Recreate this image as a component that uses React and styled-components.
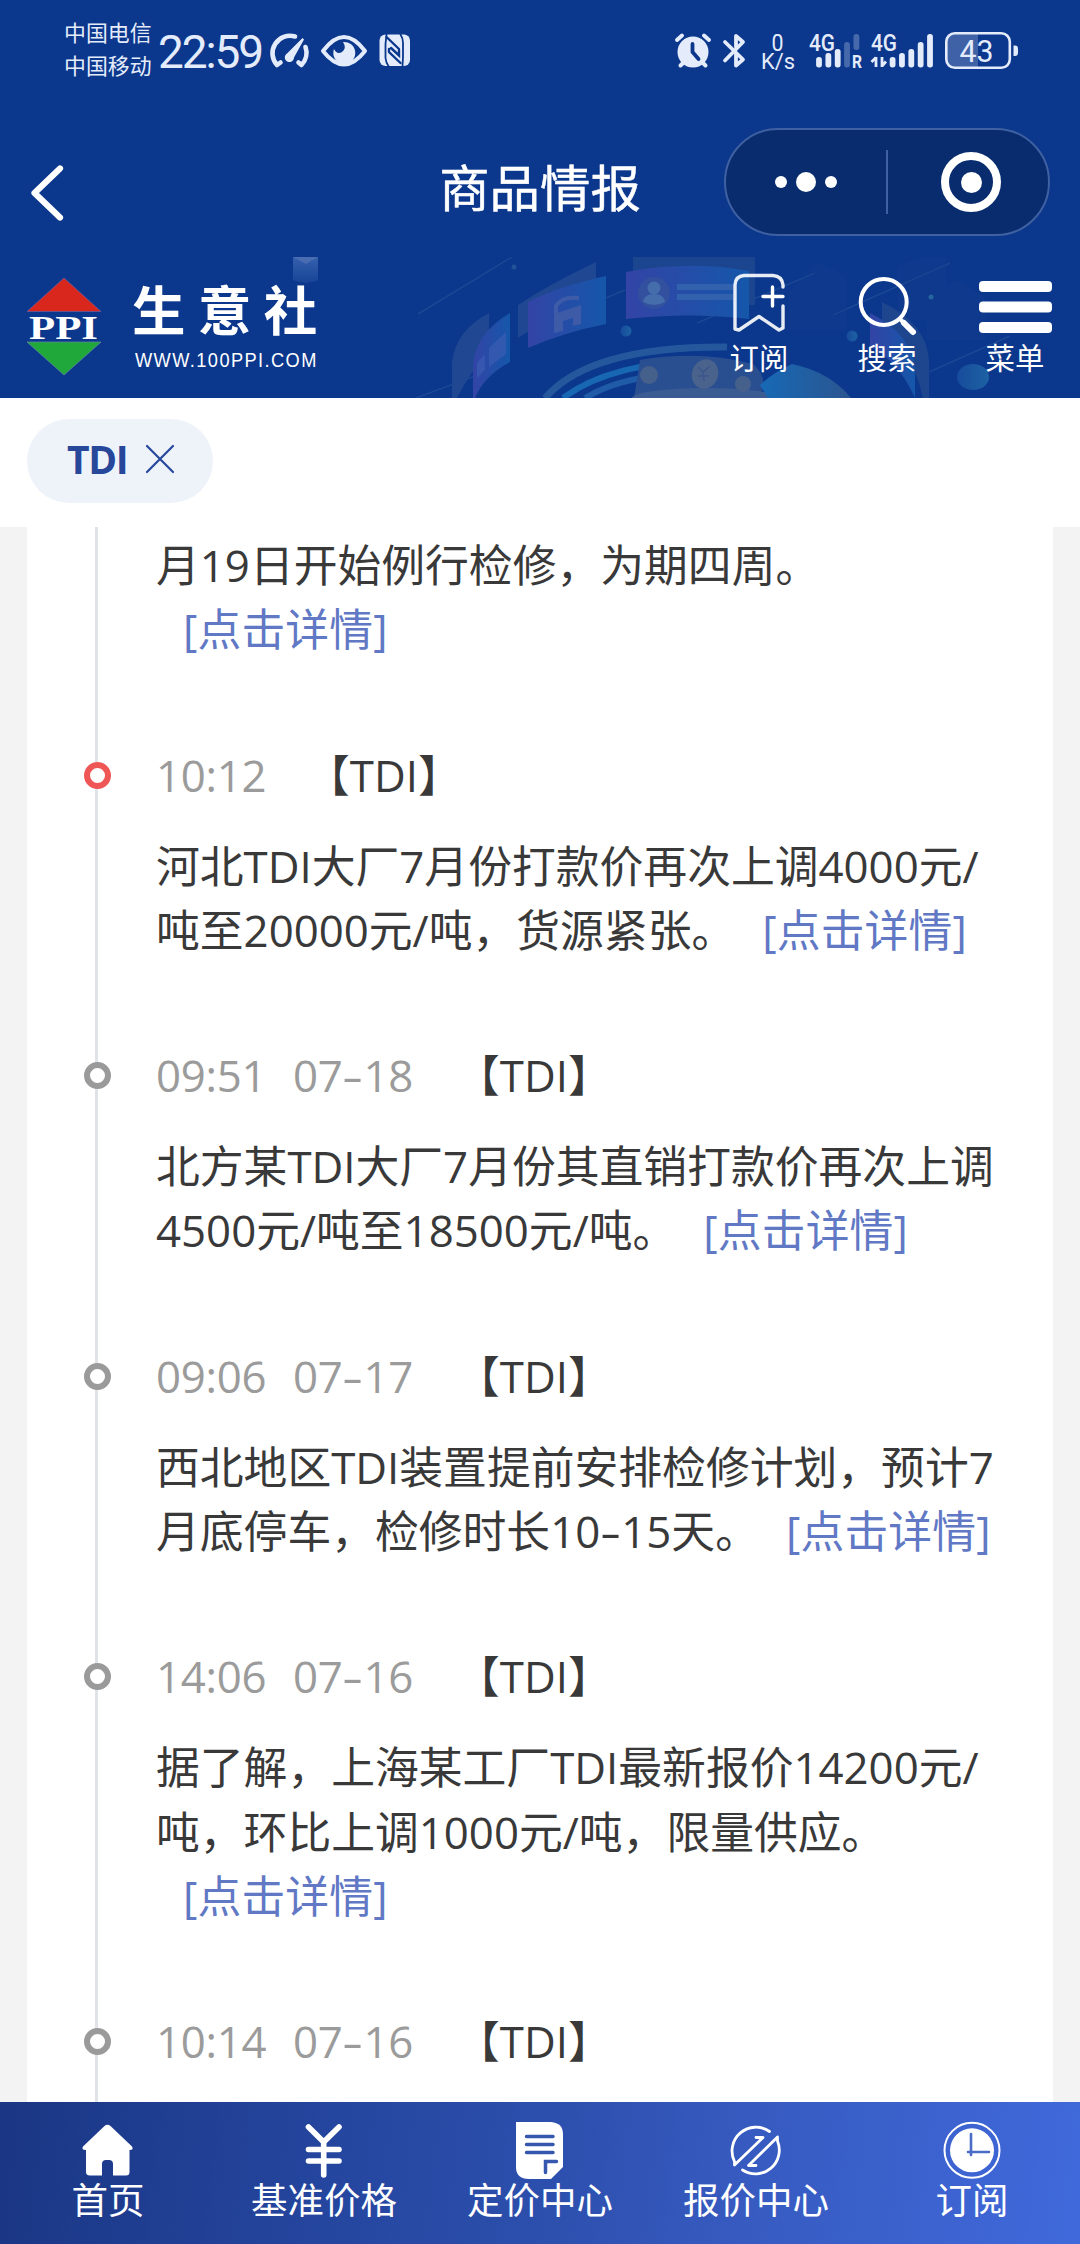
import React from "react";
import styled, { createGlobalStyle } from "styled-components";

const Global = createGlobalStyle`
  * { box-sizing: border-box; }
  body { margin: 0; background: #fff; }
`;

const ICE = "#e4ecfb";
const NAVY = "#0b378c";

const Page = styled.div`
  width: 1080px;
  height: 2244px;
  display: flex;
  flex-direction: column;
  overflow: hidden;
  background: #f3f3f3;
  font-family: "Open Sans", "Noto Sans CJK SC", sans-serif;
`;

const Top = styled.header`
  flex: none;
  background: ${NAVY};
  color: #fff;
`;

const StatusBar = styled.div`
  height: 104px;
  padding: 0 62px 0 64px;
  display: flex;
  justify-content: space-between;
  align-items: flex-start;
  color: ${ICE};
`;

const StatusSide = styled.div`
  display: flex;
  align-items: flex-start;
`;

const StatusIcons = styled.svg`
  flex: none;
  margin-top: ${(p) => p.$top}px;
`;

const Carriers = styled.div`
  padding-top: 15px;
  width: 94px;
  font: 400 21.9px/33px "Noto Sans CJK SC", sans-serif;
  white-space: nowrap;
`;

const Clock = styled.div`
  width: 111px;
  padding-top: 23px;
  font: 400 46px/58px Roboto, sans-serif;
  letter-spacing: -2.1px;
  white-space: nowrap;
`;

const NavBar = styled.div`
  height: 153px;
  display: grid;
  grid-template-columns: 356px 368px 326px;
  align-items: start;
`;

const Back = styled.button`
  margin: 57px 0 0 28px;
  padding: 0;
  border: 0;
  background: none;
  width: 40px;
  height: 62px;
`;

const Title = styled.h1`
  margin: 46px 0 0;
  text-align: center;
  font: 400 50.4px/72px "Noto Sans CJK SC", sans-serif;
  -webkit-text-stroke: 0.5px #fff;
`;

const Capsule = styled.div`
  margin-top: 24px;
  width: 326px;
  height: 108px;
  border: 2px solid #3f60a1;
  border-radius: 54px;
  background: #082c6e;
  display: grid;
  grid-template-columns: 160px 2px 160px;
  align-items: center;
`;

const Half = styled.div`
  display: flex;
  align-items: center;
  justify-content: center;
  gap: 9px;
  padding-left: ${(p) => p.$shift || 0}px;
`;

const Divider = styled.div`
  height: 64px;
  background: #3f60a1;
`;

const Dot = styled.span`
  width: ${(p) => p.$size}px;
  height: ${(p) => p.$size}px;
  border-radius: 50%;
  background: #fff;
`;

const Target = styled.span`
  width: 60px;
  height: 60px;
  border: 8.5px solid #fff;
  border-radius: 50%;
  display: flex;
  align-items: center;
  justify-content: center;
`;

const Hero = styled.div`
  position: relative;
  height: 141px;
  display: flex;
  justify-content: space-between;
  padding: 0 1px 0 26px;
  overflow: hidden;
`;

const HeroArt = styled.svg`
  position: absolute;
  left: 0;
  top: 0;
`;

const Brand = styled.div`
  position: relative;
  display: flex;
  padding-top: 20px;
`;

const BrandText = styled.div`
  margin: -1px 0 0 30px;
  display: flex;
  flex-direction: column;
`;

const BrandName = styled.div`
  font: 700 53.5px/64px "Noto Sans CJK SC", sans-serif;
  letter-spacing: 12.4px;
  white-space: nowrap;
`;

const BrandUrl = styled.div`
  margin: 6px 0 0 3px;
  font: 400 19.5px/28px "Liberation Sans", sans-serif;
  letter-spacing: 1.5px;
  white-space: nowrap;
  transform: scaleX(0.935);
  transform-origin: left;
`;

const Tools = styled.div`
  position: relative;
  display: flex;
  padding-top: 13px;
`;

const Tool = styled.div`
  width: 128px;
  display: flex;
  flex-direction: column;
  align-items: center;
  font: 400 29.4px/40px "Noto Sans CJK SC", sans-serif;
  svg { flex: none; margin-bottom: -2px; }
`;

const FilterBar = styled.div`
  flex: none;
  height: 129px;
  background: #fff;
  padding: 21px 27px 0;
`;

const Chip = styled.div`
  width: 186px;
  height: 84px;
  border-radius: 42px;
  background: #eef3fa;
  color: #27479b;
  display: flex;
  align-items: center;
  padding: 0 0 5px 40px;
  gap: 18px;
  font: 700 39px/78px "Open Sans", sans-serif;
  letter-spacing: -1.4px;
`;

const Feed = styled.main`
  flex: 1;
  min-height: 0;
  overflow: hidden;
  margin: 0 27px;
  padding-top: 6px;
  background: linear-gradient(#dfe2e7, #dfe2e7) 68px 0 / 3px 100% no-repeat #fff;
`;

const Item = styled.article`
  display: grid;
  grid-template-columns: 129px 1fr;
`;

const Marker = styled.span`
  margin: 19px 0 0 57px;
  width: 27px;
  height: 27px;
  border-radius: 50%;
  border: 6px solid ${(p) => (p.$active ? "#ef5656" : "#9a9a9a")};
  background: #fff;
`;

const Content = styled.div`
  padding-bottom: 81px;
  font-size: 43.8px;
  line-height: 64.3px;
  color: #393939;
  white-space: nowrap;
`;

const Head = styled.div`
  display: flex;
  height: 64px;
  margin-bottom: 27px;
  line-height: 64px;
`;

const Stamp = styled.span`
  width: ${(p) => p.$w}px;
  color: #9b9b9b;
  letter-spacing: -0.3px;
`;

const Hyphen = styled.span`
  display: inline-block;
  width: 21px;
  text-align: center;
  letter-spacing: 0;
  transform: scaleX(1.5);
`;

const Line = styled.div``;

const Link = styled.a`
  margin-left: 27px;
  color: #6178c5;
  letter-spacing: 0.15px;
`;

const TabBar = styled.nav`
  flex: none;
  height: 142px;
  display: grid;
  grid-template-columns: repeat(5, 1fr);
  background: linear-gradient(97deg, #1a3684 0%, #23439a 25%, #2c4fad 50%, #365abf 68%, #4069db 100%);
  color: #fff;
`;

const Tab = styled.div`
  display: flex;
  flex-direction: column;
  align-items: center;
  padding-top: 19px;
  font: 400 36.5px/50px "Noto Sans CJK SC", sans-serif;
  svg { flex: none; margin-bottom: -5px; }
`;

const LeftIcons = () => (
  <StatusIcons $top={30} width="142" height="40" viewBox="268 30 142 40" fill="none" stroke={ICE} strokeLinecap="round" strokeLinejoin="round">
    <path d="M279.500 62.500 L276 65 A17.500 17.500 0 0 1 294 36.500" strokeWidth="4.600" />
    <path d="M304.500 47 A17.500 17.500 0 0 1 300.500 65 L297.500 62.500" strokeWidth="4.600" />
    <path d="M301.500 38 L303 39.500 L293 57.500 A4.600 4.600 0 1 1 286 53.500 Z" fill={ICE} stroke="none" />
    <path d="M322 51 Q343 23 364 51 Q343 78 322 51Z" strokeWidth="4" />
    <path d="M342 42 A11 11 0 1 1 333 49 Q336 55 341 52 Q346 48 342 42Z" fill={ICE} stroke="none" />
    <rect x="378.500" y="34.500" width="30.500" height="31.500" rx="6" fill={ICE} stroke="none" />
    <path d="M385.500 34.500 L384.500 44 V58 Q385 63 387.500 66" stroke={NAVY} strokeWidth="1.800" />
    <path d="M399.500 34.500 Q402 38 402 43 V57 L401.500 66" stroke={NAVY} strokeWidth="1.800" />
    <path d="M385.500 37 L398 49 M390 48 L398 55.500 V50 M388 49 V52 L399.500 63" stroke={NAVY} strokeWidth="2.400" strokeLinejoin="miter" />
  </StatusIcons>
);

const Bars = ({ x, dim }) => (
  <g>
    {[57, 53, 49, 42, 34].map((top, i) => (
      <rect
        key={i}
        x={x + i * 9.35 - 2.9}
        y={top}
        width="5.800"
        height={(dim && i === 4 ? 50 : 67.500) - top}
        rx="2.700"
        fill={ICE}
        opacity={dim && i > 2 ? 0.28 : 1}
      />
    ))}
  </g>
);

const RightIcons = () => (
  <StatusIcons $top={20} width="344" height="64" viewBox="674 20 344 64" fill={ICE} fontFamily="Roboto, sans-serif">
    <circle cx="693" cy="52" r="15.500" />
    <path d="M677 40 L682 35.500 M709 40 L704 35.500 M684 62 L680.500 65.500 M702 62 L705.500 65.500" stroke={ICE} strokeWidth="4" strokeLinecap="round" />
    <path d="M692.500 44 V52 L698.500 59" stroke={NAVY} strokeWidth="3.800" strokeLinecap="round" strokeLinejoin="round" fill="none" />
    <path d="M725 42 L743 59.500 L736 65.500 V54 M725 60.500 L743 42 L736 36 V47" stroke={ICE} strokeWidth="3.800" strokeLinecap="round" strokeLinejoin="round" fill="none" />
    <text x="777.500" y="50.500" fontSize="23" textAnchor="middle" textLength="12" lengthAdjust="spacingAndGlyphs">0</text>
    <text x="761" y="69" fontSize="22" textLength="34" lengthAdjust="spacingAndGlyphs">K/s</text>
    <text x="809" y="51" fontSize="23" fontWeight="500" textLength="26" lengthAdjust="spacingAndGlyphs">4G</text>
    <Bars x={819} dim />
    <text x="852" y="67.500" fontSize="18" fontWeight="700" textLength="10" lengthAdjust="spacingAndGlyphs">R</text>
    <text x="871" y="51" fontSize="23" fontWeight="500" textLength="26" lengthAdjust="spacingAndGlyphs">4G</text>
    <path d="M876 57 V67 M871.500 62 L876 57.500 M882 57 V67 M882 66 L886 61.500" stroke={ICE} strokeWidth="2.800" fill="none" />
    <Bars x={892.6} />
    <path d="M955 34 H978 V67 H955 A9 9 0 0 1 946.500 58 V43 A9 9 0 0 1 955 34Z" opacity="0.240" />
    <rect x="946.300" y="33.300" width="63.500" height="34.500" rx="8.500" fill="none" stroke={ICE} strokeWidth="2.600" />
    <path d="M1013.500 45.500 h1.500 a3 3 0 0 1 3 3 v4.500 a3 3 0 0 1 -3 3 h-1.500z" />
    <text x="976.500" y="62" fontSize="32" textAnchor="middle" textLength="34" lengthAdjust="spacingAndGlyphs">43</text>
  </StatusIcons>
);

const Art = () => (
  <HeroArt width="1080" height="141" viewBox="0 257 1080 141">
    <defs>
      <linearGradient id="cube" x1="0" y1="0" x2="0" y2="1">
        <stop offset="0" stopColor="#3560ae" />
        <stop offset="1" stopColor="#174496" />
      </linearGradient>
      <linearGradient id="panel" x1="0" y1="0" x2="1" y2="0">
        <stop offset="0" stopColor="#3344a6" />
        <stop offset="1" stopColor="#1557aa" />
      </linearGradient>
      <linearGradient id="teal" x1="0" y1="0" x2="1" y2="0">
        <stop offset="0" stopColor="#1769b6" />
        <stop offset="1" stopColor="#2b558f" />
      </linearGradient>
      <linearGradient id="bub" x1="0" y1="0" x2="1" y2="0">
        <stop offset="0" stopColor="#174b9c" />
        <stop offset="1" stopColor="#1d62a2" />
      </linearGradient>
    </defs>
    <path d="M293 257 H318 V280 Q306 286 293 280Z" fill="url(#cube)" />
    <path d="M293 257 H318 L306 264Z" fill="#4a6cb0" />
    <g stroke="#1e4d97" strokeWidth="1.500" opacity="0.800">
      <path d="M418 314 L512 257 M416 398 L475 376 M606 298 L625 290 M697 323 L815 273 M833 315 L950 263 M920 376 L1010 336" />
    </g>
    <path d="M452 398 V362 Q456 330 489 313 V352 Q470 372 457 398Z" fill="#204791" />
    <path d="M473 398 V368 Q474 334 510 313 V362 Q484 376 475 398Z" fill="url(#panel)" />
    <path d="M489 348 L506 332 V354 L489 367Z M477 363 L485 354 V370 L477 378Z" fill="#3a5db2" opacity="0.700" />
    <path d="M518 333 V305 Q548 285 596 262 V298 Q552 315 518 338Z" fill="#204791" />
    <path d="M528 348 V302 Q560 286 606 276 V324 Q565 332 528 348Z" fill="url(#panel)" />
    <path d="M554 333 V314 L581 305 V324 L573 326 V318 L563 321 V331Z" fill="#3d5ba6" />
    <path d="M556 314 V306 Q562 296 579 298" fill="none" stroke="#3d5ba6" strokeWidth="4" />
    <rect x="633" y="257" width="122" height="48" fill="#1b458f" />
    <path d="M626 272 Q690 260 749 271 V319 Q690 312 626 319Z" fill="url(#panel)" />
    <circle cx="654" cy="293" r="16" fill="#33509f" />
    <circle cx="654" cy="288" r="6.500" fill="#456dab" />
    <path d="M643 302 q1 -8 11 -8 t11 8 q-11 6 -22 0z" fill="#456dab" />
    <rect x="677" y="284" width="56" height="6" fill="#3261ae" />
    <rect x="677" y="294" width="56" height="6" fill="#3261ae" />
    <path d="M789 292 L818 262 L846 276 V330 H789Z M898 266 L920 257 H946 V320 H898Z M927 296 L956 280 L985 296 V340 H927Z" fill="#15408c" opacity="0.350" />
    <g fill="none">
      <path d="M545 398 Q590 346 727 347" stroke="#24579c" strokeWidth="7" />
      <path d="M563 398 Q610 363 700 361" stroke="#1767b2" strokeWidth="6" />
      <path d="M585 398 Q625 374 690 374" stroke="#1f5ba6" strokeWidth="6" />
    </g>
    <path d="M634 398 L640 360 Q700 350 753 364 Q770 378 759 398Z" fill="#2a4f90" />
    <ellipse cx="706" cy="398" rx="74" ry="10" fill="#3a5c92" />
    <ellipse cx="649" cy="375" rx="9" ry="9" fill="#46608c" />
    <ellipse cx="705" cy="374" rx="13" ry="15" fill="#4a638c" transform="rotate(20 705 374)" />
    <ellipse cx="743" cy="384" rx="8" ry="8" fill="#46608c" />
    <path d="M698 367 l5 5 l7 -6 M703 372 l1 9 M698 376 h11" stroke="#3b568c" strokeWidth="1.500" fill="none" />
    <path d="M760 385 Q774 372 792 364 Q830 372 851 398 H768Z" fill="url(#teal)" />
    <path d="M882 302 Q927 324 929 360 V398 H923 Q912 350 882 330Z" fill="#1d468f" />
    <path d="M870 313 Q912 334 915 370 V398 Q899 362 870 346Z" fill="url(#panel)" />
    <circle cx="626" cy="331" r="5.500" fill="url(#bub)" />
    <circle cx="852" cy="336" r="5.500" fill="url(#bub)" />
    <circle cx="931" cy="297" r="2.500" fill="#24659e" />
    <circle cx="514" cy="267" r="2.500" fill="#205497" />
    <ellipse cx="973" cy="377" rx="16" ry="13" fill="url(#bub)" />
  </HeroArt>
);

const Logo = () => (
  <svg width="76" height="100" viewBox="26 277 76 100">
    <path d="M64 278 L101 311.500 H27Z" fill="#d9271d" stroke="#6b5c9a" strokeWidth="0.800" />
    <path d="M27 342 H101 L64 375Z" fill="#20a93a" stroke="#5b86a0" strokeWidth="0.800" />
    <text x="29" y="338.500" fill="#fff" fontFamily="Liberation Serif, serif" fontWeight="700" fontSize="34.500" textLength="69" lengthAdjust="spacingAndGlyphs">PPI</text>
  </svg>
);

const tools = [
  {
    label: "订阅",
    icon: (
      <svg width="72" height="68" viewBox="723 270 72 68" fill="none" stroke="#fff" strokeWidth="3.400" strokeLinejoin="round" strokeLinecap="round">
        <path d="M783 287 V285 Q782 276 773 275.500 H744 Q735.500 276 735 285 V329 L739 330 L759 316.500 L779 330 L783 328 V306" opacity="0.900" />
        <path d="M772.500 287 V306 M763 296.500 H783" />
      </svg>
    ),
  },
  {
    label: "搜索",
    icon: (
      <svg width="72" height="68" viewBox="851 270 72 68" fill="none" stroke="#fff" strokeLinecap="round">
        <circle cx="883.700" cy="302" r="23" strokeWidth="4" />
        <path d="M900 319 L904 323" strokeWidth="4" />
        <path d="M904 323 L913 332" strokeWidth="6" />
      </svg>
    ),
  },
  {
    label: "菜单",
    icon: (
      <svg width="74" height="68" viewBox="979 270 74 68" fill="#fff">
        <rect x="980" y="281" width="73" height="11" rx="4" />
        <rect x="980" y="301.500" width="73" height="11" rx="4" />
        <rect x="980" y="322" width="73" height="11" rx="4" />
      </svg>
    ),
  },
];

const items = [
  { lines: ["月19日开始例行检修，为期四周。", ""] },
  { time: "10:12", active: true, lines: ["河北TDI大厂7月份打款价再次上调4000元/", "吨至20000元/吨，货源紧张。"] },
  { time: "09:51", date: "07-18", lines: ["北方某TDI大厂7月份其直销打款价再次上调", "4500元/吨至18500元/吨。"] },
  { time: "09:06", date: "07-17", lines: ["西北地区TDI装置提前安排检修计划，预计7", "月底停车，检修时长10-15天。"] },
  { time: "14:06", date: "07-16", lines: ["据了解，上海某工厂TDI最新报价14200元/", "吨，环比上调1000元/吨，限量供应。", ""] },
  { time: "10:14", date: "07-16", lines: [] },
];

const hyphenate = (text) =>
  text.split("-").map((part, i) => (
    <React.Fragment key={i}>
      {i > 0 && <Hyphen>-</Hyphen>}
      {part}
    </React.Fragment>
  ));

const tabs = [
  {
    label: "首页",
    icon: (
      <svg width="60" height="58" viewBox="78 2122 60 58">
        <path d="M104.500 2127 Q107.500 2124.500 110.500 2127 L132 2147.500 Q134 2151 129.500 2151 V2173 Q129.500 2176.500 126 2176.500 H113 V2165 Q113 2161 109 2161 H106 Q102 2161 102 2165 V2176.500 H90 Q86 2176.500 86 2173 V2151 Q81 2151 83 2147.500Z" fill="#fff" />
      </svg>
    ),
  },
  {
    label: "基准价格",
    icon: (
      <svg width="60" height="58" viewBox="294 2122 60 58" fill="none" stroke="#fff" strokeWidth="5.600" strokeLinecap="round">
        <path d="M308.500 2128 L323.700 2143 L339 2128 M323.700 2143 V2176 M308.500 2150.500 H339 M308.500 2162 H339" />
      </svg>
    ),
  },
  {
    label: "定价中心",
    icon: (
      <svg width="60" height="58" viewBox="510 2122 60 58">
        <path d="M516 2123 H551 Q563 2124 563 2135 V2168 L551 2180 H529 Q516 2180 516 2168Z" fill="#fff" />
        <path d="M526.500 2137.500 H553 M526.500 2145.500 H553 M526.500 2153.500 H553 M556.500 2162.500 H545.500 V2173.500" stroke="#3557ae" strokeWidth="3.500" strokeLinecap="round" fill="none" />
      </svg>
    ),
  },
  {
    label: "报价中心",
    icon: (
      <svg width="60" height="58" viewBox="726 2122 60 58" fill="none" stroke="#fff" strokeWidth="2.800" strokeLinecap="round" strokeLinejoin="round">
        <path d="M769.500 2132.500 A23.800 23.800 0 0 0 734.500 2162.500 L734.500 2166 L763 2138.500 H756" />
        <path d="M742.500 2171 A23.800 23.800 0 0 0 777.500 2142 L777.500 2138 L748.500 2166.500 H756" />
      </svg>
    ),
  },
  {
    label: "订阅",
    icon: (
      <svg width="60" height="58" viewBox="941 2122 60 58">
        <circle cx="971" cy="2151.300" r="27.500" fill="none" stroke="#fff" strokeWidth="2" />
        <circle cx="971" cy="2151.300" r="22" fill="#fff" />
        <path d="M970 2135 V2156 M967 2153 H988" stroke="#4a6cc6" strokeWidth="2.600" strokeLinecap="round" />
      </svg>
    ),
  },
];

export default function App() {
  return (
    <Page>
      <Global />
      <Top>
        <StatusBar>
          <StatusSide>
            <Carriers>
              <div>中国电信</div>
              <div>中国移动</div>
            </Carriers>
            <Clock>22:59</Clock>
            <LeftIcons />
          </StatusSide>
          <RightIcons />
        </StatusBar>
        <NavBar>
          <Back aria-label="返回">
            <svg width="40" height="62" viewBox="28 161 40 62" fill="none" stroke="#fff" strokeWidth="6.200" strokeLinecap="round" strokeLinejoin="round">
              <path d="M60 168.500 L34.500 193 L60 217.500" />
            </svg>
          </Back>
          <Title>商品情报</Title>
          <Capsule>
            <Half>
              <Dot $size={12} />
              <Dot $size={20.5} />
              <Dot $size={12} />
            </Half>
            <Divider />
            <Half $shift={6}>
              <Target>
                <Dot $size={21} />
              </Target>
            </Half>
          </Capsule>
        </NavBar>
        <Hero>
          <Art />
          <Brand>
            <Logo />
            <BrandText>
              <BrandName>生意社</BrandName>
              <BrandUrl>WWW.100PPI.COM</BrandUrl>
            </BrandText>
          </Brand>
          <Tools>
            {tools.map((t) => (
              <Tool key={t.label}>
                {t.icon}
                {t.label}
              </Tool>
            ))}
          </Tools>
        </Hero>
      </Top>
      <FilterBar>
        <Chip>
          TDI
          <svg width="30" height="30" viewBox="0 0 30 30" stroke="#27479b" strokeWidth="2.200" strokeLinecap="round">
            <path d="M2 2 L28 28 M28 2 L2 28" />
          </svg>
        </Chip>
      </FilterBar>
      <Feed>
        {items.map((it, i) => (
          <Item key={i}>
            {it.time ? <Marker $active={it.active} /> : <span />}
            <Content>
              {it.time && (
                <Head>
                  <Stamp $w={it.date ? 137 : 150}>{it.time}</Stamp>
                  {it.date && <Stamp $w={163}>{hyphenate(it.date)}</Stamp>}
                  <span>【TDI】</span>
                </Head>
              )}
              {it.lines.map((l, j) => (
                <Line key={j}>
                  {hyphenate(l)}
                  {j === it.lines.length - 1 && <Link>[点击详情]</Link>}
                </Line>
              ))}
            </Content>
          </Item>
        ))}
      </Feed>
      <TabBar>
        {tabs.map((t) => (
          <Tab key={t.label}>
            {t.icon}
            {t.label}
          </Tab>
        ))}
      </TabBar>
    </Page>
  );
}
